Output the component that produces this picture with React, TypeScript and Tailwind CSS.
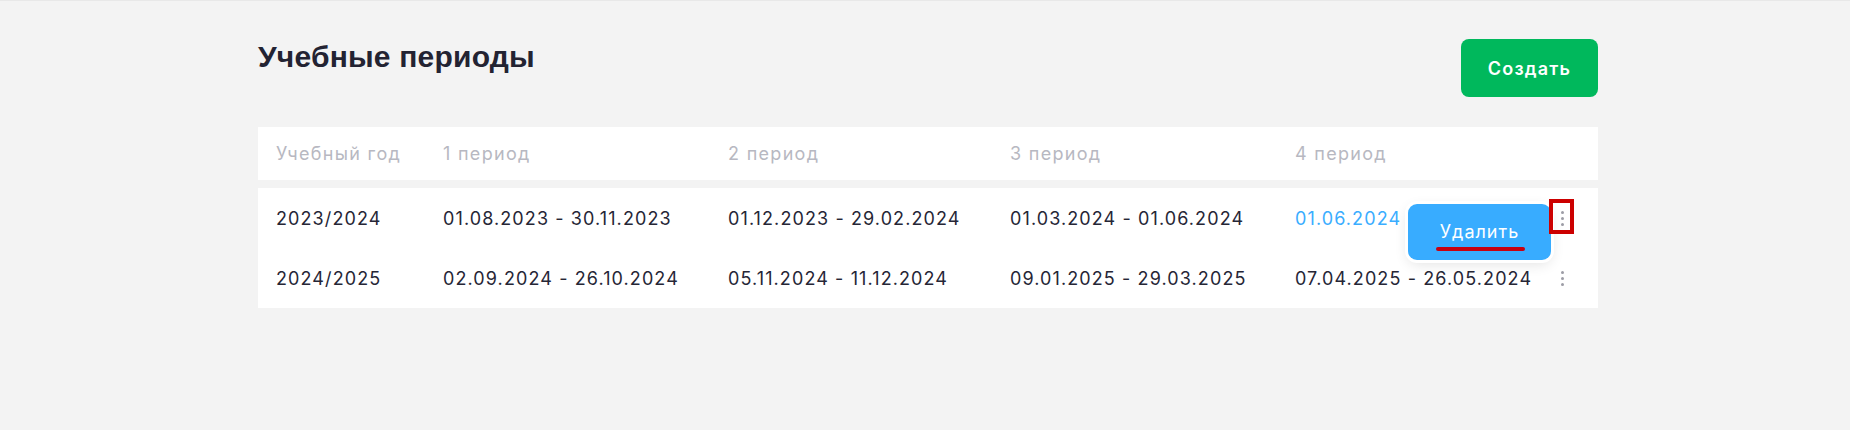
import React from "react";

const rows = [
  { year: "2023/2024", p: ["01.08.2023 - 30.11.2023", "01.12.2023 - 29.02.2024", "01.03.2024 - 01.06.2024", "01.06.2024"], active: true },
  { year: "2024/2025", p: ["02.09.2024 - 26.10.2024", "05.11.2024 - 11.12.2024", "09.01.2025 - 29.03.2025", "07.04.2025 - 26.05.2024"], active: false },
];

function Dots() {
  return (
    <div className="flex flex-col items-center gap-[3px]">
      <span className="block w-[3px] h-[3px] rounded-full bg-[#9d9da6]" />
      <span className="block w-[3px] h-[3px] rounded-full bg-[#9d9da6]" />
      <span className="block w-[3px] h-[3px] rounded-full bg-[#9d9da6]" />
    </div>
  );
}

export default function App() {
  return (
    <div className="min-h-screen bg-[#f3f3f3] border-t border-[#e8e8e8] font-['Inter',sans-serif] text-[#262636]">
      <div className="ml-[258px] w-[1340px] pt-[38px]">
        <div className="flex items-start justify-between">
          <h1 className="font-['Liberation_Sans',Arial,sans-serif] font-bold text-[30px] leading-[36px] tracking-[0.2px] text-[#232332]">
            Учебные периоды
          </h1>
          <button className="w-[137px] h-[58px] rounded-[8px] bg-[#00b85c] text-white font-semibold text-[18px] tracking-[1.2px]">
            Создать
          </button>
        </div>

        <div className="mt-[30px] flex flex-col gap-[8px]">
          <div className="grid grid-cols-[167px_285px_282px_285px_1fr_36px] px-[18px] h-[53px] items-center bg-white text-[18px] tracking-[1.3px] text-[#b7b8c1]">
            <div>Учебный год</div>
            <div>1 период</div>
            <div>2 период</div>
            <div>3 период</div>
            <div>4 период</div>
            <div />
          </div>
          <div className="bg-white">
            {rows.map((r) => (
              <div
                key={r.year}
                className="grid grid-cols-[167px_285px_282px_285px_1fr_36px] px-[18px] h-[60px] items-center text-[18px] tracking-[1.1px]"
              >
                <div>{r.year}</div>
                <div>{r.p[0]}</div>
                <div>{r.p[1]}</div>
                <div>{r.p[2]}</div>
                <div className={r.active ? "text-[#3aadff]" : ""}>{r.p[3]}</div>
                <div className="relative h-full flex items-center justify-center">
                  <Dots />
                  {r.active && (
                    <>
                      <div className="absolute right-[29px] top-[16px] w-[143px] h-[56px] rounded-[9px] bg-[#38acff] ring-[3px] ring-white shadow-[0_4px_14px_rgba(0,0,0,0.12)] flex items-center justify-center text-white text-[18px] tracking-[1px]">
                        <span className="relative -top-[1px]">Удалить</span>
                        <span className="absolute left-[28px] top-[43px] w-[89px] h-[4px] rounded-full bg-[#c80010]" />
                      </div>
                      <div className="absolute left-[5px] top-[11px] w-[25px] h-[35px] border-[4px] border-[#cc0000]" />
                    </>
                  )}
                </div>
              </div>
            ))}
          </div>
        </div>
      </div>
    </div>
  );
}
